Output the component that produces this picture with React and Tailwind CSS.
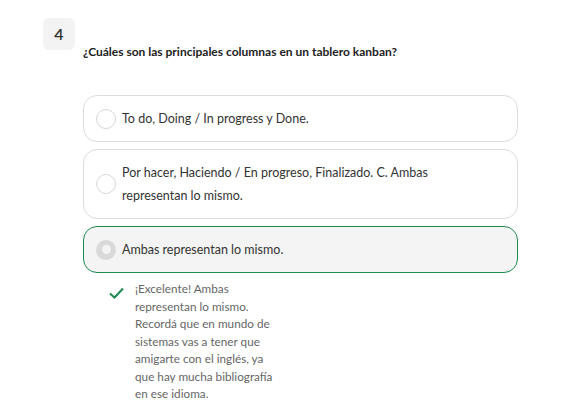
import React from "react";

const font = { fontFamily: "Lato, 'Noto Sans', sans-serif" };

function Option({ children, selected }) {
  return (
    <div
      className={
        "flex items-center rounded-[14px] border py-[11px] pl-[12px] pr-4 " +
        (selected ? "border-[#1d8a4f] bg-[#f4f4f4]" : "border-[#dcdcdc] bg-white")
      }
    >
      {selected ? (
        <div className="flex h-[20px] w-[20px] shrink-0 items-center justify-center rounded-full bg-[#d9d9d9]">
          <div className="h-[9px] w-[9px] rounded-full bg-[#f4f4f4]" />
        </div>
      ) : (
        <div className="h-[20px] w-[20px] shrink-0 rounded-full border border-[#d6d6d6] bg-white" />
      )}
      <div className="ml-[6px] text-[12.5px] leading-[23px] text-[#333333]">{children}</div>
    </div>
  );
}

export default function App() {
  return (
    <div className="min-h-[420px] w-[568px] bg-white pl-[43px] pt-[18px]" style={font}>
      <div className="flex gap-2">
        <div className="flex h-[32px] w-[32px] shrink-0 items-center justify-center rounded-[6px] bg-[#f3f3f3] text-[16px] font-semibold text-[#333]">
          4
        </div>
        <div className="w-[435px] pt-[26px]">
          <div className="text-[12px] font-bold leading-[16px] text-[#222]">
            ¿Cuáles son las principales columnas en un tablero kanban?
          </div>
          <div className="mt-[35px] flex flex-col gap-[7px]">
            <Option>To do, Doing / In progress y Done.</Option>
            <Option>
              Por hacer, Haciendo / En progreso, Finalizado. C. Ambas
              <br />
              representan lo mismo.
            </Option>
            <Option selected>Ambas representan lo mismo.</Option>
          </div>
          <div className="mt-[7px] flex pl-[26px]">
            <svg width="15" height="12" viewBox="0 0 15 12" className="mt-[7px] shrink-0">
              <path d="M1 6.5 L5.5 10.5 L14 1.5" fill="none" stroke="#1d8a4f" strokeWidth="2" />
            </svg>
            <div className="ml-[11px] text-[11.75px] leading-[17.5px] text-[#666]">
              ¡Excelente! Ambas
              <br />
              representan lo mismo.
              <br />
              Recordá que en mundo de
              <br />
              sistemas vas a tener que
              <br />
              amigarte con el inglés, ya
              <br />
              que hay mucha bibliografía
              <br />
              en ese idioma.
            </div>
          </div>
        </div>
      </div>
    </div>
  );
}
